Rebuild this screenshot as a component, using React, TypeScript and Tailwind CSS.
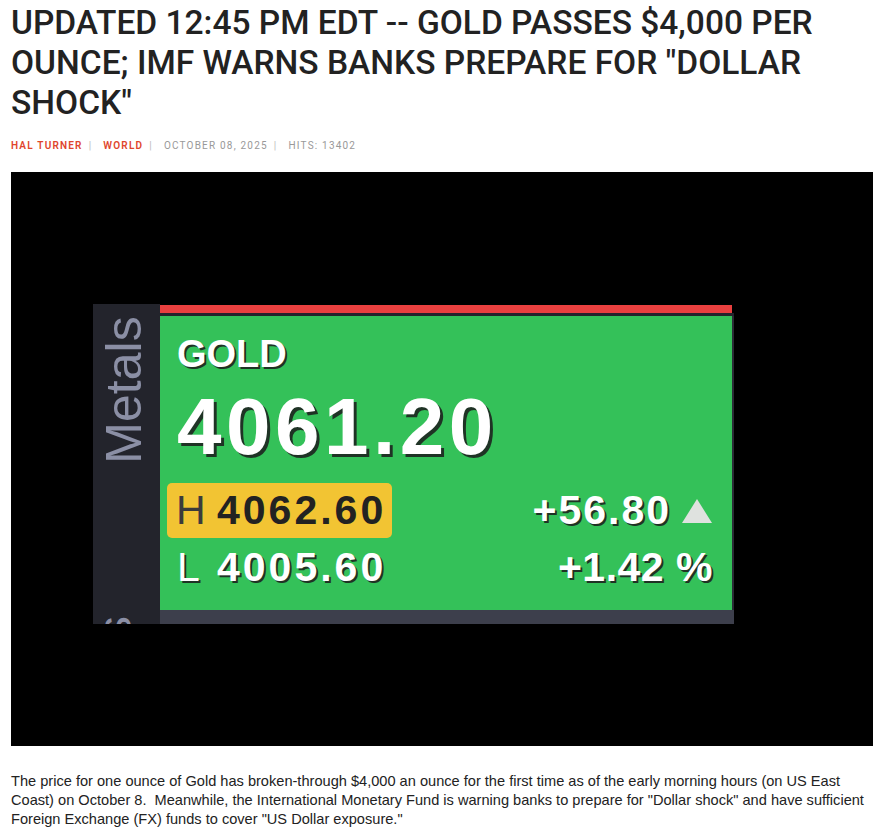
import React from "react";

export default function App() {
  const shadowBig = { textShadow: "3px 3px 0 #1f3325" };
  const shadowSm = { textShadow: "2px 2px 0 #1f3325" };
  return (
    <div className="bg-white w-[882px] min-h-[832px] px-[11px] pt-[3px]">
      <h1
        className="text-[33.5px] leading-[40px] font-medium text-[#222] uppercase"
        style={{ fontFamily: "Roboto, sans-serif" }}
      >
        UPDATED 12:45 PM EDT -- GOLD PASSES $4,000 PER OUNCE; IMF WARNS BANKS PREPARE FOR "DOLLAR SHOCK"
      </h1>
      <div
        className="mt-[16px] flex items-center text-[10px] leading-[14px] tracking-[1.2px] uppercase"
        style={{ fontFamily: "Roboto, sans-serif" }}
      >
        <span className="text-[#e0452c] font-semibold">HAL TURNER</span>
        <span className="text-[#bbb] ml-[6px] mr-[11px]">|</span>
        <span className="text-[#e0452c] font-semibold">WORLD</span>
        <span className="text-[#bbb] ml-[6px] mr-[11px]">|</span>
        <span className="text-[#999]">OCTOBER 08, 2025</span>
        <span className="text-[#bbb] ml-[6px] mr-[11px]">|</span>
        <span className="text-[#999]">HITS: 13402</span>
      </div>
      <div className="mt-[19px] w-[862px] h-[574px] bg-black flex items-start pl-[82px] pt-[132px]">
        <div className="flex w-[641px] h-[320px]" style={{ fontFamily: "'Liberation Sans', Arial, sans-serif" }}>
          <div className="relative w-[67px] h-full bg-[#23242c] overflow-hidden">
            <div className="absolute left-[4px] top-[11px] w-[54px] h-[150px] flex items-center justify-center">
              <span className="block -rotate-90 text-[50px] leading-none text-[#8b8fa5] whitespace-nowrap">Metals</span>
            </div>
            <div className="absolute left-[10px] top-[300px] text-[48px] leading-none text-[#8b8fa5] -rotate-90">s</div>
          </div>
          <div className="relative flex-1 flex flex-col">
            <div className="absolute -left-[1px] top-[67px] w-0 h-0 border-y-[10px] border-y-transparent border-l-[17px] border-l-[#23242c]" />
            <div className="h-[8px] bg-[#e8403f] mr-[2px] mt-[1px]" />
            <div className="h-[3px] bg-[#23242c]" />
            <div className="flex-1 bg-[#34c159] border-r-[2px] border-[#2b2c36] relative px-[7px]">
              <div className="pl-[10px] pt-[19px] text-[38px] leading-none font-bold text-white" style={shadowSm}>
                GOLD
              </div>
              <div className="pl-[10px] mt-[14px] text-[80px] leading-none font-bold text-white tracking-[4.5px]" style={shadowBig}>
                4061.20
              </div>
              <div className="mt-[16px] flex justify-between items-start">
                <div className="flex flex-col">
                  <div className="w-[225px] h-[55px] bg-[#f2c433] rounded-[5px] flex items-center pl-[9px] text-[41px] leading-none">
                    <span className="text-[#3b3b3b] w-[41px]">H</span>
                    <span className="font-bold text-[#222] tracking-[3px]">4062.60</span>
                  </div>
                  <div className="h-[58px] flex items-center pl-[10px] text-[41px] leading-none text-white" style={shadowSm}>
                    <span className="w-[40px]">L</span>
                    <span className="font-bold tracking-[3px]">4005.60</span>
                  </div>
                </div>
                <div className="flex flex-col items-end pr-[12px]">
                  <div className="h-[55px] flex items-center text-[41px] leading-none font-bold text-white tracking-[2px]" style={shadowSm}>
                    +56.80
                    <svg width="32" height="26" viewBox="0 0 32 26" className="ml-[10px]">
                      <polygon points="16,1 31,25 1,25" fill="#dfe2df" />
                    </svg>
                  </div>
                  <div className="h-[58px] flex items-center text-[41px] leading-none font-bold text-white tracking-[0.5px]" style={shadowSm}>
                    +1.42 %
                  </div>
                </div>
              </div>
            </div>
            <div className="h-[14px] bg-[#3d3f4c]" />
          </div>
        </div>
      </div>
      <p
        className="mt-[26px] text-[14.6px] leading-[19px] text-[#222]"
        style={{ fontFamily: "'Liberation Sans', Arial, sans-serif" }}
      >
        The price for one ounce of Gold has broken-through $4,000 an ounce for the first time as of the early morning hours (on US East Coast) on October 8.&nbsp; Meanwhile, the International Monetary Fund is warning banks to prepare for "Dollar shock" and have sufficient Foreign Exchange (FX) funds to cover "US Dollar exposure."
      </p>
    </div>
  );
}
